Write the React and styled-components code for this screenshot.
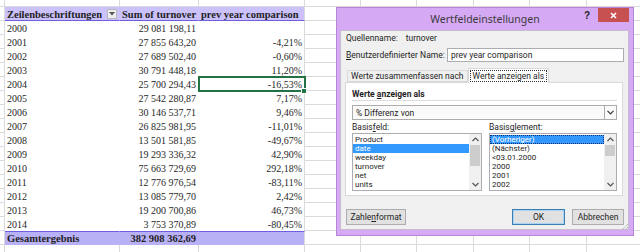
import React from 'react';
import styled, { createGlobalStyle, css } from 'styled-components';

const GlobalStyle = createGlobalStyle`
  html, body {
    margin: 0;
    padding: 0;
    background: #fff;
    overflow: hidden;
  }
  #root {
    position: relative;
    width: 640px;
    height: 252px;
    overflow: hidden;
  }
`;

const COLS = [5, 115, 79, 106, 56, 56, 57, 56, 57, 56];

const ROWS = [
  ['2000', '29 081 198,11', ''],
  ['2001', '27 855 643,20', '-4,21%'],
  ['2002', '27 689 502,40', '-0,60%'],
  ['2003', '30 791 448,18', '11,20%'],
  ['2004', '25 700 294,43', '-16,53%'],
  ['2005', '27 542 280,87', '7,17%'],
  ['2006', '30 146 537,71', '9,46%'],
  ['2007', '26 825 981,95', '-11,01%'],
  ['2008', '13 501 581,85', '-49,67%'],
  ['2009', '19 293 336,32', '42,90%'],
  ['2010', '75 663 729,69', '292,18%'],
  ['2011', '12 776 976,54', '-83,11%'],
  ['2012', '13 085 779,70', '2,42%'],
  ['2013', '19 200 700,86', '46,73%'],
  ['2014', '3 753 370,89', '-80,45%'],
];

const BASE_FIELDS = ['Product', 'date', 'weekday', 'turnover', 'net', 'units'];
const BASE_ITEMS = ['(Vorheriger)', '(Nächster)', '<03.01.2000', '2000', '2001', '2002'];

const App = () => {
  const blanks = n => COLS.slice(COLS.length - n).map((_, i) => <GridCell key={'b' + i} />);
  const blankRow = key => COLS.map((_, i) => <GridCell key={key + i} />);

  return (
    <>
      <GlobalStyle />
      <Sheet>
        {blankRow('top')}

        <GridCell />
        <PivotCell $kind="head">
          Zeilenbeschriftungen
          <FilterBtn>
            <svg width="6" height="4" viewBox="0 0 6 4">
              <path d="M0 0h6L3 3.5z" fill="#555" />
            </svg>
          </FilterBtn>
        </PivotCell>
        <PivotCell $kind="head">Sum of turnover</PivotCell>
        <PivotCell $kind="head" $edge>prev year comparison</PivotCell>
        {blanks(6)}

        {ROWS.map(([year, sum, diff]) => (
          <React.Fragment key={year}>
            <GridCell />
            <PivotCell>{year}</PivotCell>
            <PivotCell $align="right">{sum}</PivotCell>
            <PivotCell $align="right" $edge $selected={year === '2004'}>
              {diff}
            </PivotCell>
            {blanks(6)}
          </React.Fragment>
        ))}

        <GridCell />
        <PivotCell $kind="total">Gesamtergebnis</PivotCell>
        <PivotCell $kind="total" $align="right">382 908 362,69</PivotCell>
        <PivotCell $kind="total" $edge />
        {blanks(6)}

        {blankRow('bottom')}
      </Sheet>

      <Window>
        <TitleBar>
          Wertfeldeinstellungen
          <Help>?</Help>
          <CloseBtn>
            <svg width="7" height="7" viewBox="0 0 7 7">
              <path d="M1 1l5 5M6 1L1 6" stroke="#fff" strokeWidth="1.6" />
            </svg>
          </CloseBtn>
        </TitleBar>

        <Client>
          <InfoRow>
            <InfoLabel>Quellenname:</InfoLabel>
            <span>turnover</span>
          </InfoRow>

          <NameRow>
            <NameLabel>
              <u>B</u>enutzerdefinierter Name:
            </NameLabel>
            <TextInput>prev year comparison</TextInput>
          </NameRow>

          <TabStrip>
            <Tab>Werte zusammenfassen nach</Tab>
            <Tab $active>
              <FocusRect>Werte anzeigen als</FocusRect>
            </Tab>
          </TabStrip>

          <Panel>
            <SectionTitle>
              Werte <u>a</u>nzeigen als
            </SectionTitle>
            <Select>
              <SelectValue>% Differenz von</SelectValue>
              <SelectArrow>
                <svg width="7" height="5" viewBox="0 0 7 5">
                  <path d="M0.5 0.8L3.5 3.8L6.5 0.8" stroke="#333" strokeWidth="1.2" fill="none" />
                </svg>
              </SelectArrow>
            </Select>

            <ListGrid>
              <FieldLabel>
                Basis<u>f</u>eld:
              </FieldLabel>
              <FieldLabel>
                Basis<u>g</u>lement:
              </FieldLabel>

              <ListBox>
                <Items>
                  {BASE_FIELDS.map(f => (
                    <Item key={f} $selected={f === 'date'}>
                      {f}
                    </Item>
                  ))}
                </Items>
                <Scrollbar $thumb={21} />
              </ListBox>

              <ListBox>
                <Items>
                  {BASE_ITEMS.map(f => (
                    <Item key={f} $selected={f === '(Vorheriger)'} $focus={f === '(Vorheriger)'}>
                      {f}
                    </Item>
                  ))}
                </Items>
                <Scrollbar $thumb={11} />
              </ListBox>
            </ListGrid>
          </Panel>

          <Footer>
            <Button $w={60}>
              Zahle<u>n</u>format
            </Button>
            <Spacer />
            <Button $w={53} $default>
              OK
            </Button>
            <Button $w={52}>Abbrechen</Button>
          </Footer>
        </Client>

        <Grip>
          <svg width="9" height="9" viewBox="0 0 9 9">
            <path d="M8 2L2 8M8 5L5 8" stroke="#9a9a9a" strokeWidth="1" strokeDasharray="1 1" />
          </svg>
        </Grip>
      </Window>
    </>
  );
};

const Scrollbar = ({ $thumb }) => (
  <ScrollTrack>
    <ScrollArrow>
      <svg width="7" height="5" viewBox="0 0 7 5">
        <path d="M0.5 4L3.5 1L6.5 4" stroke="#555" strokeWidth="1.2" fill="none" />
      </svg>
    </ScrollArrow>
    <Thumb style={{ height: $thumb }} />
    <TrackFill />
    <ScrollArrow>
      <svg width="7" height="5" viewBox="0 0 7 5">
        <path d="M0.5 1L3.5 4L6.5 1" stroke="#555" strokeWidth="1.2" fill="none" />
      </svg>
    </ScrollArrow>
  </ScrollTrack>
);

export default App;

/* ---------- sheet ---------- */

const Sheet = styled.div`
  display: grid;
  grid-template-columns: ${COLS.map(c => c + 'px').join(' ')};
  grid-template-rows: 7px;
  grid-auto-rows: 14px;
`;

const GridCell = styled.div`
  box-sizing: border-box;
  border-right: 1px solid #dadada;
  border-bottom: 1px solid #dadada;
  background: #fff;
`;

const PIVOT_BG = {
  head: '#cbc2fb',
  total: '#b9b1f6',
  body: '#fff',
};

const PivotCell = styled.div`
  box-sizing: border-box;
  position: relative;
  display: flex;
  align-items: center;
  justify-content: ${({ $align }) => ($align === 'right' ? 'flex-end' : 'space-between')};
  padding: 0 2px 0 2px;
  font-family: 'Liberation Serif', 'Times New Roman', serif;
  font-size: 10px;
  color: #1f1f1f;
  white-space: nowrap;
  background: ${({ $kind = 'body' }) => PIVOT_BG[$kind]};
  border-right: 1px solid ${({ $edge }) => ($edge ? '#dadada' : 'transparent')};

  ${({ $kind }) =>
    $kind === 'head' &&
    css`
      font-weight: bold;
      font-size: 10.5px;
      border-bottom: 1px solid #6e5fe2;
      padding-top: 1px;
    `}

  ${({ $kind }) =>
    $kind === 'total' &&
    css`
      font-weight: bold;
      font-size: 10.5px;
      border-top: 1px solid #6e5fe2;
    `}

  ${({ $selected }) =>
    $selected &&
    css`
      z-index: 2;
      outline: 2px solid #217346;
      outline-offset: -1px;

      &::after {
        content: '';
        position: absolute;
        right: -3px;
        bottom: -3px;
        width: 4px;
        height: 4px;
        background: #217346;
        border: 1px solid #fff;
      }
    `}
`;

const FilterBtn = styled.span`
  box-sizing: border-box;
  width: 10px;
  height: 10px;
  display: flex;
  align-items: center;
  justify-content: center;
  background: #eeeeee;
  border: 1px solid #b8b8b8;
`;

/* ---------- dialog ---------- */

const Window = styled.div`
  position: absolute;
  left: 336px;
  top: 7px;
  width: 298px;
  height: 229px;
  box-sizing: border-box;
  display: flex;
  flex-direction: column;
  background: #d6a9f5;
  border: 1px solid #b685da;
  font-family: Roboto, 'Noto Sans', sans-serif;
  font-size: 8.5px;
  color: #1e1e1e;
`;

const TitleBar = styled.div`
  position: relative;
  flex: none;
  height: 22px;
  display: flex;
  align-items: center;
  justify-content: center;
  font-family: 'Noto Sans', 'Open Sans', sans-serif;
  font-size: 10.5px;
  color: #3b3b3b;
`;

const Help = styled.span`
  position: absolute;
  right: 43px;
  top: 2px;
  font-family: 'Liberation Sans', sans-serif;
  font-size: 10px;
  font-weight: 700;
  color: #222;
`;

const CloseBtn = styled.div`
  position: absolute;
  right: 4px;
  top: 0;
  width: 31px;
  height: 14px;
  display: flex;
  align-items: center;
  justify-content: center;
  background: #c75050;
`;

const Client = styled.div`
  flex: 1;
  box-sizing: border-box;
  margin: 0 4px 5px 3px;
  padding: 1px 4px 0 4px;
  display: flex;
  flex-direction: column;
  background: #f0f0f0;
  border: 1px solid #c7bcd0;
`;

const InfoRow = styled.div`
  height: 12px;
  display: flex;
  align-items: center;
  padding-left: 1px;
`;

const InfoLabel = styled.span`
  margin-right: 8px;
`;

const NameRow = styled.div`
  margin-top: 4px;
  height: 14px;
  display: flex;
  align-items: center;
  padding-left: 1px;
`;

const NameLabel = styled.span`
  width: 101px;
  white-space: nowrap;
`;

const TextInput = styled.div`
  flex: 1;
  box-sizing: border-box;
  height: 14px;
  padding-left: 3px;
  display: flex;
  align-items: center;
  background: #fff;
  border: 1px solid #abadb3;
`;

const TabStrip = styled.div`
  margin-top: 6px;
  height: 14px;
  display: flex;
  align-items: flex-end;
  padding-left: 2px;
  position: relative;
  z-index: 1;
`;

const Tab = styled.div`
  box-sizing: border-box;
  height: ${({ $active }) => ($active ? '15px' : '12px')};
  margin-bottom: ${({ $active }) => ($active ? '-1px' : '0')};
  padding: 0 ${({ $active }) => ($active ? '1px' : '3px')};
  display: flex;
  align-items: center;
  background: ${({ $active }) => ($active ? '#fff' : '#f0f0f0')};
  border: 1px solid #d9d9d9;
  border-bottom: ${({ $active }) => ($active ? 'none' : '1px solid #d9d9d9')};
  white-space: nowrap;
`;

const FocusRect = styled.span`
  padding: 0 2px;
  line-height: 10px;
  border: 1px dotted #333;
`;

const Panel = styled.div`
  box-sizing: border-box;
  height: 114px;
  margin-right: 1px;
  padding: 6px 5px 0 6px;
  background: #fff;
  border: 1px solid #d9d9d9;
`;

const SectionTitle = styled.div`
  height: 12px;
  box-sizing: border-box;
  font-weight: 700;
  border-bottom: 1px solid #dcdcdc;
  line-height: 10px;
`;

const Select = styled.div`
  margin-top: 4px;
  box-sizing: border-box;
  height: 15px;
  display: flex;
  background: #fafafa;
  border: 1px solid #acacac;
`;

const SelectValue = styled.div`
  flex: 1;
  padding-left: 3px;
  display: flex;
  align-items: center;
`;

const SelectArrow = styled.div`
  width: 11px;
  display: flex;
  align-items: center;
  justify-content: center;
  border-left: 1px solid #acacac;
`;

const ListGrid = styled.div`
  display: grid;
  grid-template-columns: 130px 128px;
  grid-template-rows: 12px 58px;
  column-gap: 7px;
  margin-top: 1px;
`;

const FieldLabel = styled.div`
  display: flex;
  align-items: center;
`;

const ListBox = styled.div`
  box-sizing: border-box;
  display: flex;
  background: #fff;
  border: 1px solid #abadb3;
  overflow: hidden;
`;

const Items = styled.div`
  flex: 1;
  padding-top: 1px;
`;

const Item = styled.div`
  box-sizing: border-box;
  height: 9px;
  line-height: 9px;
  padding-left: 2px;
  font-size: 8px;
  white-space: nowrap;
  background: ${({ $selected }) => ($selected ? '#3399ff' : 'transparent')};
  color: ${({ $selected }) => ($selected ? '#fff' : '#1e1e1e')};
  outline: ${({ $focus }) => ($focus ? '1px dotted #0b2f6a' : 'none')};
  outline-offset: -1px;
`;

const ScrollTrack = styled.div`
  width: 12px;
  display: flex;
  flex-direction: column;
  background: #f0f0f0;
`;

const ScrollArrow = styled.div`
  height: 11px;
  display: flex;
  align-items: center;
  justify-content: center;
`;

const Thumb = styled.div`
  margin: 0 1px;
  background: #cdcdcd;
`;

const TrackFill = styled.div`
  flex: 1;
`;

const Footer = styled.div`
  margin-top: 13px;
  height: 16px;
  display: flex;
  gap: 7px;
  padding-left: 1px;
`;

const Spacer = styled.div`
  flex: 1;
`;

const Button = styled.div`
  box-sizing: border-box;
  width: ${({ $w }) => $w}px;
  height: 16px;
  display: flex;
  align-items: center;
  justify-content: center;
  background: #e1e1e1;
  border: 1px solid ${({ $default }) => ($default ? '#3c7fb1' : '#adadad')};
  box-shadow: ${({ $default }) => ($default ? 'inset 0 0 0 1px #a9d3f5' : 'none')};
`;

const Grip = styled.div`
  position: absolute;
  right: 4px;
  bottom: 4px;
  width: 9px;
  height: 9px;
`;
